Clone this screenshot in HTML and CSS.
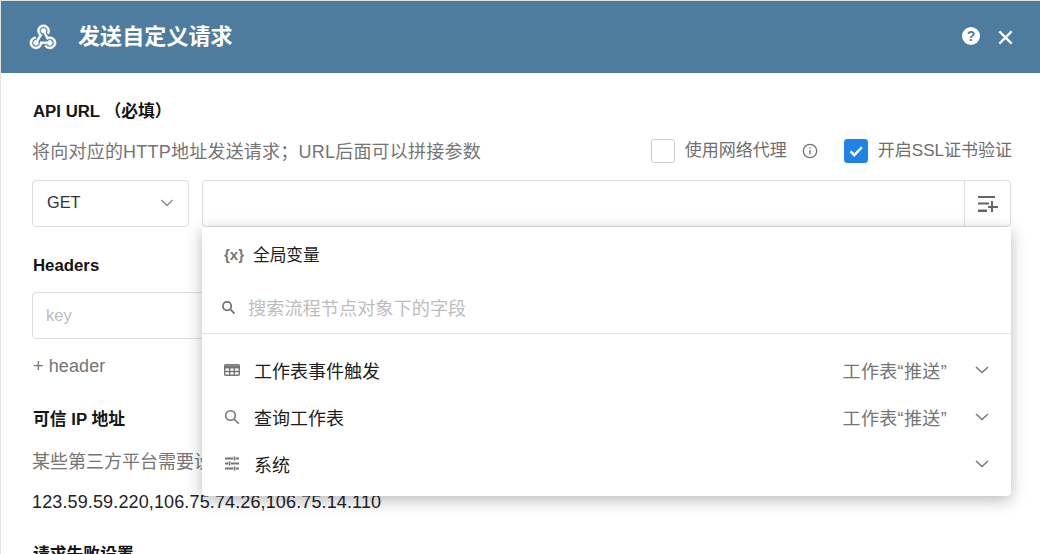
FILE: index.html
```html
<!DOCTYPE html>
<html lang="zh-CN">
<head>
<meta charset="utf-8">
<title>发送自定义请求</title>
<link rel="stylesheet" href="styles.css">
</head>
<body>
<div class="dialog">
  <header class="head">
    <svg class="logo" viewBox="0 0 24 24" width="32" height="32" fill="#fff" stroke="#fff" stroke-width=".35">
      <path d="M10.46,19C9,21.07 6.15,21.59 4.09,20.15C2.04,18.71 1.56,15.84 3,13.75C3.87,12.5 5.21,11.83 6.58,11.77L6.63,13.2C5.72,13.27 4.84,13.74 4.27,14.56C3.27,16 3.58,17.94 4.95,18.91C6.33,19.87 8.26,19.5 9.26,18.07C9.57,17.62 9.75,17.13 9.82,16.63V15.62L15.4,15.58L15.47,15.47C16,14.55 17.15,14.23 18.05,14.75C18.95,15.27 19.26,16.43 18.73,17.35C18.2,18.26 17.04,18.58 16.14,18.06C15.73,17.83 15.44,17.46 15.31,17.04L11.24,17.06C11.13,17.73 10.87,18.39 10.46,19M17.74,11.86C20.27,12.17 22.07,14.44 21.76,16.93C21.45,19.43 19.15,21.2 16.62,20.89C15.13,20.71 13.9,19.86 13.19,18.68L14.43,17.96C14.92,18.73 15.75,19.28 16.75,19.41C18.5,19.62 20.05,18.43 20.26,16.76C20.47,15.09 19.23,13.56 17.5,13.35C16.96,13.29 16.44,13.36 15.97,13.53L15.12,13.97L12.54,9.2H12.32C11.26,9.17 10.44,8.29 10.47,7.25C10.5,6.21 11.4,5.4 12.45,5.44C13.5,5.5 14.33,6.37 14.3,7.41C14.28,7.85 14.11,8.25 13.84,8.56L15.74,12.06C16.36,11.85 17.04,11.78 17.74,11.86M8.25,9.14C7.25,6.79 8.31,4.1 10.62,3.12C12.94,2.14 15.62,3.25 16.62,5.6C17.21,6.97 17.09,8.47 16.42,9.67L15.18,8.95C15.6,8.14 15.67,7.15 15.27,6.22C14.59,4.62 12.78,3.85 11.23,4.5C9.67,5.16 8.97,7 9.65,8.6C9.93,9.26 10.4,9.77 10.97,10.11L11.36,10.32L8.29,15.31C8.32,15.36 8.36,15.42 8.39,15.5C8.88,16.41 8.54,17.56 7.62,18.05C6.71,18.54 5.56,18.18 5.06,17.24C4.57,16.31 4.91,15.16 5.83,14.67C6.22,14.46 6.65,14.41 7.06,14.5L9.37,10.73C8.9,10.3 8.5,9.76 8.25,9.14Z"/>
    </svg>
    <h1 class="title">发送自定义请求</h1>
    <span class="head-actions">
      <span class="help">?</span>
      <svg class="close" viewBox="0 0 16 16" width="15" height="15" stroke="#fff" stroke-width="2.400"><path d="M1.500 1.500l13 13M14.500 1.500l-13 13"/></svg>
    </span>
  </header>
  <main class="body">
    <div class="label first">API URL （必填）</div>
    <div class="desc-row">
      <span class="desc spaced">将向对应的HTTP地址发送请求；URL后面可以拼接参数</span>
      <span class="options">
        <span class="check"></span>
        <span class="opt-text">使用网络代理</span>
        <svg class="info" viewBox="0 0 16 16" width="16" height="16" fill="none" stroke="#757575" stroke-width="1.300"><circle cx="8" cy="8" r="6.700"/><path d="M8 7v4.500M8 4.200v1.600"/></svg>
        <span class="check on"><svg viewBox="0 0 24 24" width="20" height="20" fill="none" stroke="#fff" stroke-width="3"><path d="M5.500 12.500l4.500 4.500 9-9.500"/></svg></span>
        <span class="opt-text">开启SSL证书验证</span>
      </span>
    </div>
    <div class="url-row">
      <div class="select">GET
        <svg viewBox="0 0 14 8" width="14" height="8" fill="none" stroke="#8a8a8a" stroke-width="1.400"><path d="M1.500 1l5.500 5.500L12.500 1"/></svg>
      </div>
      <div class="url-wrap">
        <div class="url">
          <span class="url-input"></span>
          <span class="url-btn">
            <svg viewBox="0 0 20 16" width="20" height="16" fill="#666"><path d="M0 0h17v2H0zM0 6.500h11v2H0zM0 13.500h9V16H0zM13 5h2v5h5v2h-5v4h-2v-4H10v-2h3z"/></svg>
          </span>
        </div>
        <div class="menu">
          <div class="var-row">
            <span class="var-icon">{x}</span>
            <span>全局变量</span>
          </div>
          <div class="search">
            <svg viewBox="0 0 16 16" width="15" height="15" fill="none" stroke="#6f6f6f" stroke-width="1.800"><circle cx="6.500" cy="6.500" r="4.500"/><path d="M10 10l4.500 4.500"/></svg>
            <span class="placeholder">搜索流程节点对象下的字段</span>
          </div>
          <ul class="list">
            <li class="item">
              <svg class="ico" viewBox="0 0 16 12" width="16" height="12" fill="none" stroke="#757575" stroke-width="1.400"><rect x=".7" y=".7" width="14.600" height="10.600" rx="1"/><path d="M1 3h14" stroke-width="3"/><path d="M1 7.500h14M5.700 3v8M10.300 3v8"/></svg>
              <span class="name">工作表事件触发</span>
              <span class="meta">工作表“推送”</span>
              <svg class="chev" viewBox="0 0 14 8" width="14" height="8" fill="none" stroke="#777" stroke-width="1.500"><path d="M1 1l6 5.500L13 1"/></svg>
            </li>
            <li class="item">
              <svg class="ico" viewBox="0 0 16 16" width="16" height="16" fill="none" stroke="#757575" stroke-width="1.600"><circle cx="6.500" cy="6.500" r="4.800"/><path d="M10 10l4.800 4.800"/></svg>
              <span class="name">查询工作表</span>
              <span class="meta">工作表“推送”</span>
              <svg class="chev" viewBox="0 0 14 8" width="14" height="8" fill="none" stroke="#777" stroke-width="1.500"><path d="M1 1l6 5.500L13 1"/></svg>
            </li>
            <li class="item">
              <svg class="ico" viewBox="0 0 16 15" width="16" height="15" fill="none" stroke="#757575" stroke-width="1.800"><path d="M1 2.500h8M12 2.500h3M10.500 .5v4M1 7.500h3M7 7.500h8M5.500 5.500v4M1 12.500h8M12 12.500h3M10.500 10.500v4"/></svg>
              <span class="name">系统</span>
              <svg class="chev" viewBox="0 0 14 8" width="14" height="8" fill="none" stroke="#777" stroke-width="1.500"><path d="M1 1l6 5.500L13 1"/></svg>
            </li>
          </ul>
        </div>
      </div>
    </div>
    <div class="label headers">Headers</div>
    <div class="key-input">key</div>
    <div class="add">+ header</div>
    <div class="label trusted">可信 IP 地址</div>
    <div class="desc plain">某些第三方平台需要设置可信IP地址</div>
    <div class="ips">123.59.59.220,106.75.74.26,106.75.14.110</div>
    <div class="label fail">请求失败设置</div>
  </main>
</div>
</body>
</html>
```
FILE: styles.css
```css
* { box-sizing: border-box; }
html, body { margin: 0; padding: 0; height: 100%; overflow: hidden; }
body {
  background: #e2e2e2;
  padding: 1px 0 0 1px;
  font-family: "Liberation Sans", "Noto Sans CJK SC", sans-serif;
  color: #151515;
}
.dialog { background: #fff; height: 100%; overflow: hidden; }
.head {
  height: 72px;
  background: #4e7c9f;
  display: flex;
  align-items: center;
  padding: 0 27px 0 26px;
  color: #fff;
}
.logo { margin-right: 19px; }
.title { font-size: 22px; font-weight: 700; margin: 0; line-height: 30px; letter-spacing: .1px; }
.head-actions { margin-left: auto; display: flex; align-items: center; gap: 18px; }
.help {
  width: 18px; height: 18px; border-radius: 50%;
  background: #fff; color: #4e7c9f;
  font-size: 14px; font-weight: 700; line-height: 18px; text-align: center;
  margin-bottom: 2px;
}
.close { flex: none; }
.body { padding: 0 29px 0 31px; }
.label { font-size: 16.800px; font-weight: 700; line-height: 22px; padding-left: 1px; }
.first { padding-top: 28px; }
.desc { font-size: 18px; color: #757575; line-height: 26px; }
.spaced { letter-spacing: .22px; }
.desc-row { display: flex; align-items: center; margin-top: 16px; height: 26px; }
.options { margin-left: auto; margin-right: -1px; display: flex; align-items: center; margin-top: -2px; }
.opt-text { font-size: 17px; color: #6e6e6e; line-height: 24px; }
.check {
  width: 24px; height: 24px; border: 1px solid #ccc; border-radius: 3px;
  margin-right: 10px; background: #fff;
  display: flex; align-items: center; justify-content: center;
}
.check.on { background: #2084e4; border-color: #2084e4; }
.info { margin: 0 26px 0 15px; }
.url-row { display: flex; gap: 13px; margin-top: 15px; }
.select {
  width: 157px; height: 47px; border: 1px solid #ddd; border-radius: 4px;
  padding: 0 14px 2px; font-size: 16.300px; color: #333;
  display: flex; align-items: center; justify-content: space-between;
}
.url-wrap { position: relative; flex: 1; }
.url { height: 47px; border: 1px solid #ddd; border-radius: 4px; display: flex; }
.url-input { flex: 1; }
.url-btn {
  width: 46px; border-left: 1px solid #ddd;
  display: flex; align-items: center; justify-content: center;
}
.menu {
  position: absolute; left: 0; right: 0; top: 47px; z-index: 5;
  background: #fff; border-radius: 0 0 4px 4px;
  box-shadow: 0 4px 16px rgba(0, 0, 0, .28);
  height: 269px;
}
.var-row {
  display: flex; align-items: center; height: 54px; padding-left: 22px;
  font-size: 16.700px; color: #1d1d1d;
}
.var-icon { width: 29px; font-size: 15px; font-weight: 700; color: #777; }
.search {
  display: flex; align-items: center; height: 53px; padding: 0 0 0 19px; gap: 12px;
  border-bottom: 1px solid #e3e3e3;
}
.placeholder { font-size: 18.200px; color: #bdbdbd; }
.list { list-style: none; margin: 0; padding: 12px 0 0; }
.item { display: flex; align-items: center; height: 47px; padding: 0 22px; font-size: 18px; color: #1d1d1d; }
.ico { flex: none; margin-right: 14px; }
.name { flex: 1; }
.meta { color: #757575; margin-right: 28px; font-size: 18px; letter-spacing: .35px; }
.chev { flex: none; }
.headers { margin-top: 28px; }
.key-input {
  width: 200px; height: 47px; margin-top: 15px; border: 1px solid #ddd; border-radius: 4px;
  padding: 0 13px; line-height: 45px; font-size: 16.500px; color: #bdbdbd;
}
.add { font-size: 18px; letter-spacing: .1px; color: #757575; margin-top: 14px; line-height: 26px; padding-left: 1px; }
.trusted { margin-top: 30px; }
.plain { margin-top: 18px; white-space: nowrap; }
.ips { font-size: 18px; letter-spacing: .13px; color: #222; margin-top: 14px; line-height: 26px; }
.fail { margin-top: 29px; }
```
